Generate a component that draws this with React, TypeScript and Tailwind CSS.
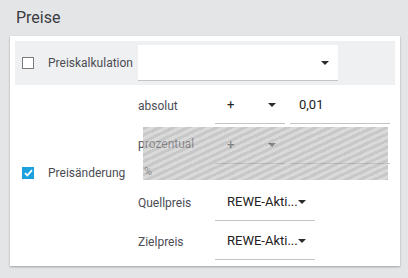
import React from "react";

const Arrow = ({ light }: { light?: boolean }) => (
  <svg width="8" height="4" viewBox="0 0 8 4" className="shrink-0">
    <path d="M0 0h8L4 4z" fill={light ? "#555" : "#2b2b2b"} />
  </svg>
);

const Select = ({ value, width }: { value: string; width: string }) => (
  <div
    className={`${width} h-[37px] flex items-center justify-between pl-[12px] pr-[9px] border-b border-[#c4c4c4] text-[13px] text-[#222]`}
  >
    <span>{value}</span>
    <Arrow />
  </div>
);

export default function App() {
  return (
    <div className="w-[408px] h-[278px] bg-[#e4e5e7] font-[Roboto,sans-serif] overflow-hidden">
      <div className="h-[36px] flex items-center pl-[16px] text-[16px] text-[#3b3b42]">
        Preise
      </div>

      <div className="ml-[10px] w-[390px] h-[230px] bg-white p-[5px] shadow-[0_1px_2px_rgba(0,0,0,0.3)]">
        {/* Preiskalkulation */}
        <div className="h-[44px] bg-[#eff0f2] flex items-center">
          <div className="w-[123px] flex items-center pl-[7px]">
            <div className="w-[12px] h-[12px] border border-[#7a7a7a] bg-white" />
            <span className="ml-[14px] text-[12px] text-[#4c4c54]">Preiskalkulation</span>
          </div>
          <div className="w-[200px] h-[36px] bg-white border-b border-[#c4c4c4] flex items-center justify-end pr-[9px]">
            <Arrow />
          </div>
        </div>

        {/* Preisänderung */}
        <div className="flex">
          <div className="w-[123px] flex items-center pl-[7px]">
            <div className="w-[12px] h-[12px] bg-[#1da1dc] flex items-center justify-center">
              <svg width="9" height="8" viewBox="0 0 9 8">
                <path d="M1 4.2l2.3 2.3L8 1.2" stroke="white" strokeWidth="1.8" fill="none" />
              </svg>
            </div>
            <span className="ml-[14px] text-[12px] text-[#4c4c54]">Preisänderung</span>
          </div>

          <div className="relative pt-[2px] text-[12px] text-[#4c4c54]">
            <div className="flex items-center h-[37px]">
              <span className="w-[77px]">absolut</span>
              <Select value="+" width="w-[70px]" />
              <div className="ml-[5px] w-[100px] h-[37px] flex items-center pl-[9px] border-b border-[#c4c4c4] text-[13px] text-[#222]">
                0,01
              </div>
            </div>
            <div className="flex items-center h-[37px] mt-[3px]">
              <span className="w-[77px] -mt-[3px]">prozentual</span>
              <Select value="+" width="w-[70px]" />
              <div className="ml-[5px] w-[100px] h-[37px] border-b border-[#c4c4c4]" />
            </div>
            <div className="h-[17px] flex items-center pl-[6px] text-[11px]">%</div>
            <div className="flex items-center h-[37px] mt-[3px]">
              <span className="w-[77px]">Quellpreis</span>
              <Select value="REWE-Akti..." width="w-[100px]" />
            </div>
            <div className="flex items-center h-[37px] mt-[2px]">
              <span className="w-[77px]">Zielpreis</span>
              <Select value="REWE-Akti..." width="w-[100px]" />
            </div>

            <div className="absolute left-[5px] top-[42px] w-[245px] h-[53px] opacity-60 bg-[repeating-linear-gradient(155deg,#a3a3a3_0px,#a3a3a3_3px,#c1c1c1_3px,#c1c1c1_6px)]" />
          </div>
        </div>
      </div>
    </div>
  );
}
